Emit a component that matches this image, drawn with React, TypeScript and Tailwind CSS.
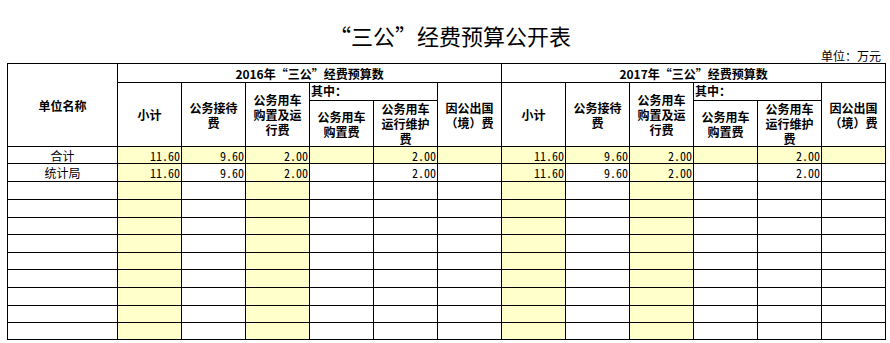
const yellow = 'bg-[#ffffcc]';

type Row = { name: string; cells: string[]; fill: boolean[] };

const sumFill = [true, false, true, false, false, false, true, false, true, false, false, false];
const allFill = Array(12).fill(true);

const rows: Row[] = [
  { name: '合计', cells: ['11.60', '9.60', '2.00', '', '2.00', '', '11.60', '9.60', '2.00', '', '2.00', ''], fill: allFill },
  { name: '统计局', cells: ['11.60', '9.60', '2.00', '', '2.00', '', '11.60', '9.60', '2.00', '', '2.00', ''], fill: sumFill },
  ...Array.from({ length: 9 }, () => ({ name: '', cells: Array(12).fill(''), fill: sumFill })),
];

const rowHeights = ['h-[17px]', 'h-[18px]', 'h-[18px]', 'h-[18px]', 'h-[17px]', 'h-[18px]', 'h-[17px]', 'h-[18px]', 'h-[18px]', 'h-[17px]', 'h-[17px]'];

function YearHeaders() {
  return (
    <>
      <th rowSpan={2} className="border border-black font-bold">小计</th>
      <th rowSpan={2} className="border border-black font-bold">公务接待<br />费</th>
      <th rowSpan={2} className="border border-black font-bold">公务用车<br />购置及运<br />行费</th>
      <th colSpan={2} className="border border-black font-bold text-left align-top pl-px">其中：</th>
      <th rowSpan={2} className="border border-black font-bold">因公出国<br />（境）费</th>
    </>
  );
}

function SubHeaders() {
  return (
    <>
      <th className="border border-black font-bold">公务用车<br />购置费</th>
      <th className="border border-black font-bold">公务用车<br />运行维护<br />费</th>
    </>
  );
}

export default function App() {
  return (
    <div className="w-[890px] h-[343px] bg-white pl-[7px] text-black font-['Noto_Sans_CJK_SC',sans-serif]">
      <div lang="zh-CN" className="w-[878px] h-[48px] pt-[24px] text-center text-[22px] leading-[22px] pl-[8px]">
        “三公”经费预算公开表
      </div>
      <div className="w-[878px] h-[15px] text-right text-[12px] leading-[15px] pr-[4px]">单位：万元</div>
      <table className="border-collapse table-fixed w-[878px] text-[12px] leading-[15px]">
        <colgroup>
          <col className="w-[110px]" />
          {Array.from({ length: 12 }, (_, i) => (
            <col key={i} className="w-[64px]" />
          ))}
        </colgroup>
        <thead>
          <tr className="h-[19px]">
            <th rowSpan={3} className="border border-black font-bold">单位名称</th>
            <th colSpan={6} className="border border-black font-bold">2016年“三公”经费预算数</th>
            <th colSpan={6} className="border border-black font-bold">2017年“三公”经费预算数</th>
          </tr>
          <tr className="h-[18px]">
            <YearHeaders />
            <YearHeaders />
          </tr>
          <tr className="h-[44px]">
            <SubHeaders />
            <SubHeaders />
          </tr>
        </thead>
        <tbody>
          {rows.map((r, ri) => (
            <tr key={ri} className={rowHeights[ri]}>
              <td className="border border-black text-center p-0">{r.name}</td>
              {r.cells.map((c, ci) => (
                <td
                  key={ci}
                  className={`border border-black text-right p-0 pr-[1px] font-['Noto_Sans_Mono_CJK_SC','Liberation_Mono',monospace] ${r.fill[ci] ? yellow : ''}`}
                >
                  {c}
                </td>
              ))}
            </tr>
          ))}
        </tbody>
      </table>
    </div>
  );
}
